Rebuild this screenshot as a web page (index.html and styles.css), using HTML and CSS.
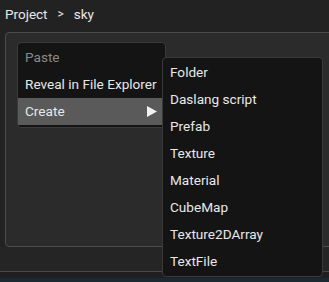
FILE: index.html
```html
<!DOCTYPE html>
<html>
<head>
<meta charset="utf-8">
<link rel="stylesheet" href="styles.css">
</head>
<body>
<div class="app">
  <div class="crumbs"><span>Project</span><span class="sep">&gt;</span><span>sky</span></div>
  <div class="panel"></div>
  <div class="gap"></div>
  <div class="footer"></div>
  <div class="status"></div>

  <div class="menu main">
    <div class="item disabled">Paste</div>
    <div class="item">Reveal in File Explorer</div>
    <div class="item active">Create<svg class="arrow" width="10" height="11" viewBox="0 0 10 11"><path d="M0 0L10 5.5L0 11Z" fill="#f2f2f2"/></svg></div>
  </div>

  <div class="menu sub">
    <div class="item">Folder</div>
    <div class="item">Daslang script</div>
    <div class="item">Prefab</div>
    <div class="item">Texture</div>
    <div class="item">Material</div>
    <div class="item">CubeMap</div>
    <div class="item">Texture2DArray</div>
    <div class="item">TextFile</div>
  </div>
</div>
</body>
</html>
```
FILE: styles.css
```css
html, body {
  margin: 0;
  padding: 0;
  background: #222222;
  font-family: Roboto, "Liberation Sans", sans-serif;
  font-size: 13.6px;
  color: #e8e8e8;
  overflow: hidden;
}
.app {
  position: relative;
  width: 329px;
  height: 282px;
  display: flex;
  flex-direction: column;
  overflow: hidden;
}
.crumbs {
  height: 32px;
  padding-left: 5px;
  box-sizing: border-box;
  display: flex;
  gap: 10px;
  align-items: flex-start;
  padding-top: 6px;
  line-height: 16px;
  font-size: 13.5px;
  color: #e8e8e8;
}
.crumbs .sep { font-size: 12px; }
.panel {
  margin-left: 5px;
  margin-right: -20px;
  height: 215px;
  box-sizing: border-box;
  border: 1px solid #4c4c4c;
  border-radius: 4px;
  background: #2b2b2b;
}
.gap {
  height: 24px;
  background: #252525;
  border-bottom: 1px solid #4a4a4a;
}
.footer {
  height: 6px;
  background: #1f1f1f;
}
.status {
  flex: 1;
  background: #1b2a31;
}
.menu {
  position: absolute;
  background: #141414;
  border: 1px solid #3a3a3a;
  border-radius: 4px;
  box-sizing: border-box;
}
.menu .item {
  height: 27px;
  line-height: 27px;
  padding-left: 7px;
  white-space: nowrap;
  display: flex;
  align-items: center;
}
.menu.main {
  left: 17px;
  top: 42px;
  width: 149px;
  height: 86px;
  padding-top: 1px;
}
.menu.main .item.disabled { color: #8a8a8a; }
.menu.main .item.active {
  background: #5a5a5a;
  margin-right: 3px;
  justify-content: space-between;
  padding-right: 5px;
}
.arrow { display: block; }
.menu.sub {
  left: 162px;
  top: 57px;
  width: 161px;
  height: 220px;
  padding-top: 1px;
}
```
